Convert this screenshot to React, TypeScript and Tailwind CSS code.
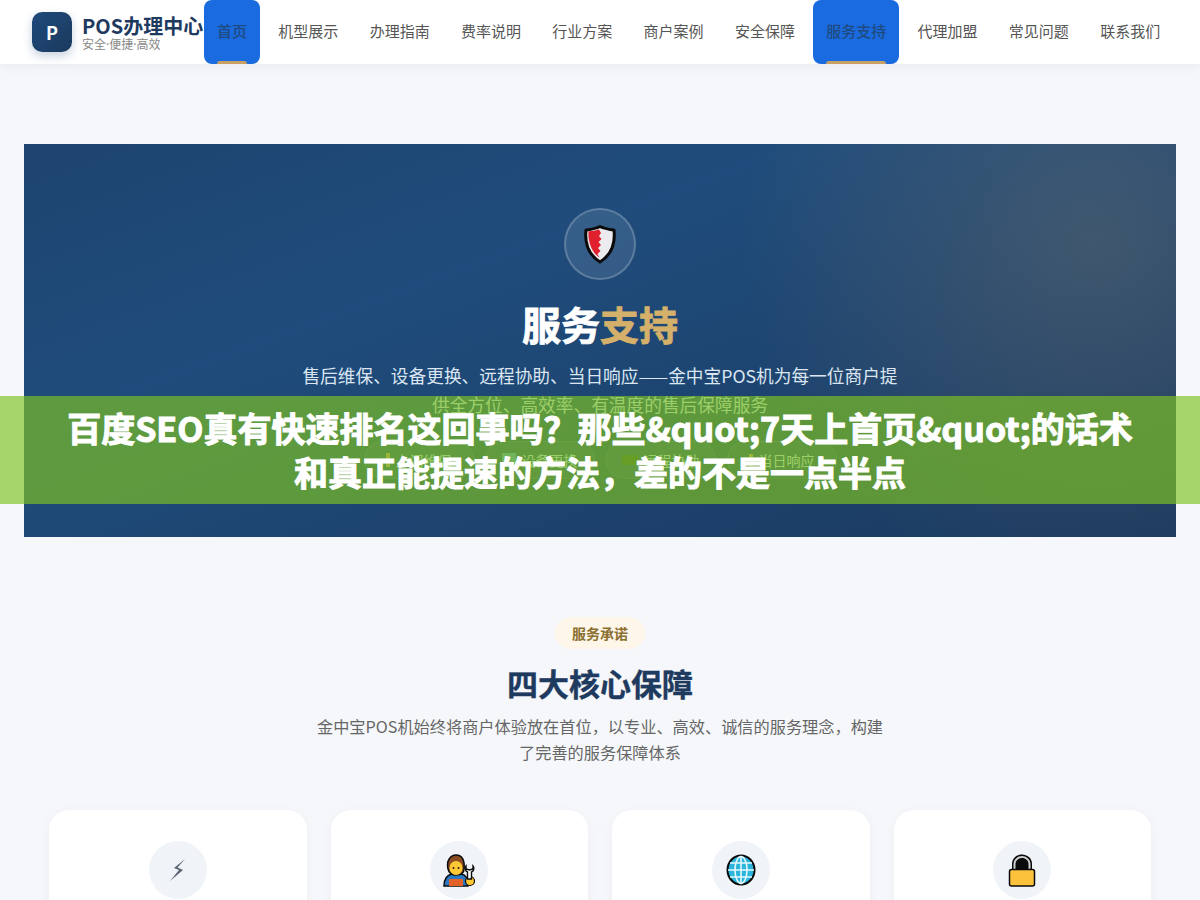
const navItems = [
  { label: "首页", active: true },
  { label: "机型展示" },
  { label: "办理指南" },
  { label: "费率说明" },
  { label: "行业方案" },
  { label: "商户案例" },
  { label: "安全保障" },
  { label: "服务支持", active: true },
  { label: "代理加盟" },
  { label: "常见问题" },
  { label: "联系我们" },
];

function ShieldIcon() {
  return (
    <svg width="32" height="40" viewBox="0 0 32 40">
      <path d="M16 2.5 C21 5 26 5.5 30 6 C31.5 20 27 31 16 38 C5 31 .5 20 2 6 C6 5.5 11 5 16 2.5 Z" fill="#ececf0" stroke="#0a0a0a" strokeWidth="3" strokeLinejoin="round" />
      <path d="M15 5.5 C11 6.5 8 7 4.5 7.5 C4 19 8 28 15.5 34 L13.5 30 L16.5 27 L14 24 L17 21 L14.5 18 L17.5 15 L15 12 L17 9 Z" fill="#e0202c" />
    </svg>
  );
}

function BoltIcon() {
  return (
    <svg width="20" height="24" viewBox="0 0 20 24">
      <path d="M17 1 L6 10 L11 12 L2 23 L15 12 L9.5 9.5 Z" fill="#5b6472" />
    </svg>
  );
}

function WorkerIcon() {
  return (
    <svg width="32" height="33" viewBox="0 0 32 33">
      <path d="M1 32 C1 24 4 21 9 20 L18 20 C23 21 25 24 25 32 Z" fill="#2a78c4" stroke="#0a0a0a" strokeWidth="1.5" />
      <path d="M6 32 L6 25 L20 25 L20 32 Z" fill="#e2622a" />
      <path d="M5 15 C3 6 8 1 13 1 C19 1 22 6 21 15 C21 19 18 21 13 21 C9 21 6 19 5 15 Z" fill="#8a4b22" stroke="#0a0a0a" strokeWidth="1.5" />
      <ellipse cx="13" cy="14" rx="6.5" ry="7" fill="#fcc934" />
      <circle cx="10.5" cy="14" r="1" fill="#2a1a0a" />
      <circle cx="15.5" cy="14" r="1" fill="#2a1a0a" />
      <circle cx="27" cy="27" r="4.5" fill="#fcc934" stroke="#0a0a0a" strokeWidth="1.2" />
      <path d="M23 12 C21.5 14 22 17 24.5 18 L24.5 25 L28.5 25 L28.5 18 C31 17 31.5 14 30 12 L30 15 L26.5 16 L23 15 Z" fill="#fff" stroke="#0a0a0a" strokeWidth="1.4" />
    </svg>
  );
}

function GlobeIcon() {
  return (
    <svg width="30" height="32" viewBox="0 0 30 32">
      <ellipse cx="15" cy="16" rx="13.5" ry="14.5" fill="#2bb5dc" stroke="#0a0a0a" strokeWidth="2" />
      <g stroke="#e6f7fc" strokeWidth="1.6" fill="none">
        <ellipse cx="15" cy="16" rx="6" ry="13.5" />
        <path d="M15 2 L15 30 M2 16 L28 16 M4 9 L26 9 M4 23 L26 23" />
      </g>
    </svg>
  );
}

function LockIcon() {
  return (
    <svg width="28" height="34" viewBox="0 0 28 34">
      <path d="M4 17 L4 11 C4 5 9 1.5 14 1.5 C19 1.5 24 5 24 11 L24 17 Z" fill="#0a0a0a" />
      <path d="M5.5 17 L5.5 11 C5.5 6 10 3 14 3 C18 3 22.5 6 22.5 11 L22.5 17 L20.5 17 L20.5 11 C20.5 7.5 17.5 5 14 5 C10.5 5 7.5 7.5 7.5 11 L7.5 17 Z" fill="#cfcfcf" />
      <rect x="1.5" y="16.5" width="25" height="16.5" rx="2" fill="#fcc23c" stroke="#0a0a0a" strokeWidth="1.5" />
    </svg>
  );
}

const cards = [<BoltIcon />, <WorkerIcon />, <GlobeIcon />, <LockIcon />];

const heroPills = [
  { label: "上门维保", icon: "h-3.5 w-1 bg-[#c9a063]" },
  { label: "设备更换", icon: "size-3.5 bg-[#5c9ad0]" },
  { label: "远程协助", icon: "h-2.5 w-4 bg-[#3a5a30]" },
  { label: "当日响应", icon: "h-3 w-1 bg-[#c9a063]" },
];

export default function App() {
  return (
    <div className="relative h-[900px] overflow-hidden bg-[#f5f7fa] font-['Noto_Sans_CJK_SC','Noto_Sans',sans-serif]">
      {/* header */}
      <header className="flex h-16 items-center bg-white pl-8 shadow-[0_2px_12px_rgba(0,0,0,0.06)]">
        <div className="flex w-[172px] shrink-0 items-center gap-2.5">
          <div className="flex size-10 items-center justify-center rounded-[10px] bg-gradient-to-br from-[#1e4a7c] to-[#1b3a5e] text-lg font-bold text-white shadow-[0_4px_10px_rgba(30,74,124,0.25)]">
            P
          </div>
          <div className="pt-0.5 whitespace-nowrap">
            <div className="text-[20px] leading-6 font-bold text-[#1e3a5f]">POS办理中心</div>
            <div className="font-['Noto_Sans','Noto_Sans_CJK_SC',sans-serif] text-[12px] leading-[14px] text-[#888]">安全·便捷·高效</div>
          </div>
        </div>
        <nav className="flex h-16 gap-[5.3px]">
          {navItems.map((item) => (
            <a
              key={item.label}
              className={
                item.active
                  ? "relative flex items-center rounded-lg bg-[#1a6be0] px-[13px] pb-0.5 text-[15px] font-medium whitespace-nowrap text-[#1e4a80]"
                  : "flex items-center px-[13px] pb-0.5 text-[15px] whitespace-nowrap text-[#555]"
              }
            >
              {item.label}
              {item.active && <span className="absolute right-[13px] bottom-0 left-[13px] h-[3px] rounded-t-sm bg-[#c9a063]" />}
            </a>
          ))}
        </nav>
      </header>

      {/* hero */}
      <section className="mx-6 mt-20 flex h-[393px] flex-col items-center bg-[radial-gradient(circle_at_93%_25%,rgba(201,160,99,0.2),transparent_32%),linear-gradient(160deg,#1e4470,#1f4c7c_35%,#1b3a60_100%)] pt-16">
        <div className="flex size-[72px] items-center justify-center rounded-full border-2 border-white/20 bg-white/10">
          <ShieldIcon />
        </div>
        <h1 className="mt-[15px] text-[39px] leading-[56px] font-bold text-white [-webkit-text-stroke:0.8px]">
          服务<span className="text-[#d4b06a]">支持</span>
        </h1>
        <p className="mt-[10px] w-[600px] text-center text-[17.7px] leading-[29px] text-[#dbe6f2]">
          售后维保、设备更换、远程协助、当日响应——金中宝POS机为每一位商户提供全方位、高效率、有温度的售后保障服务
        </p>
        <div className="mt-[22px] flex gap-[11px]">
          {heroPills.map((pill) => (
            <div key={pill.label} className="flex h-[38px] w-[110px] items-center justify-center gap-1.5 rounded-full border border-white/10 bg-white/5 text-sm whitespace-nowrap text-[#dbe6f2]">
              <span className={pill.icon} />
              {pill.label}
            </div>
          ))}
        </div>
      </section>

      {/* guarantees */}
      <section className="mt-20 flex flex-col items-center px-[49px]">
        <div className="rounded-full bg-[#fdf6e9] px-[17px] py-1.5 text-[14px] leading-5 font-bold text-[#8b6f2f]">服务承诺</div>
        <h2 className="mt-3 text-[31px] leading-[44px] font-bold text-[#1e3a5f] [-webkit-text-stroke:0.4px]">四大核心保障</h2>
        <p className="mt-2 w-[580px] text-center text-[16.2px] leading-[26px] text-[#666]">
          金中宝POS机始终将商户体验放在首位，以专业、高效、诚信的服务理念，构建了完善的服务保障体系
        </p>
        <div className="mt-[45px] grid w-full grid-cols-4 gap-6">
          {cards.map((icon, i) => (
            <div key={i} className="flex h-[240px] flex-col items-center rounded-[20px] bg-white pt-[31px] shadow-[0_2px_12px_rgba(0,0,0,0.04)]">
              <div className="flex size-[58px] items-center justify-center rounded-full bg-[#f0f3f8]">{icon}</div>
            </div>
          ))}
        </div>
      </section>

      {/* overlay title */}
      <div className="absolute top-[396px] right-0 left-0 flex h-[108px] items-center justify-center bg-[rgba(125,194,35,0.67)] px-[60px] text-center text-[34px] leading-[44px] font-bold text-white [-webkit-text-stroke:1px]">
        百度SEO真有快速排名这回事吗？那些&amp;quot;7天上首页&amp;quot;的话术和真正能提速的方法，差的不是一点半点
      </div>
    </div>
  );
}
